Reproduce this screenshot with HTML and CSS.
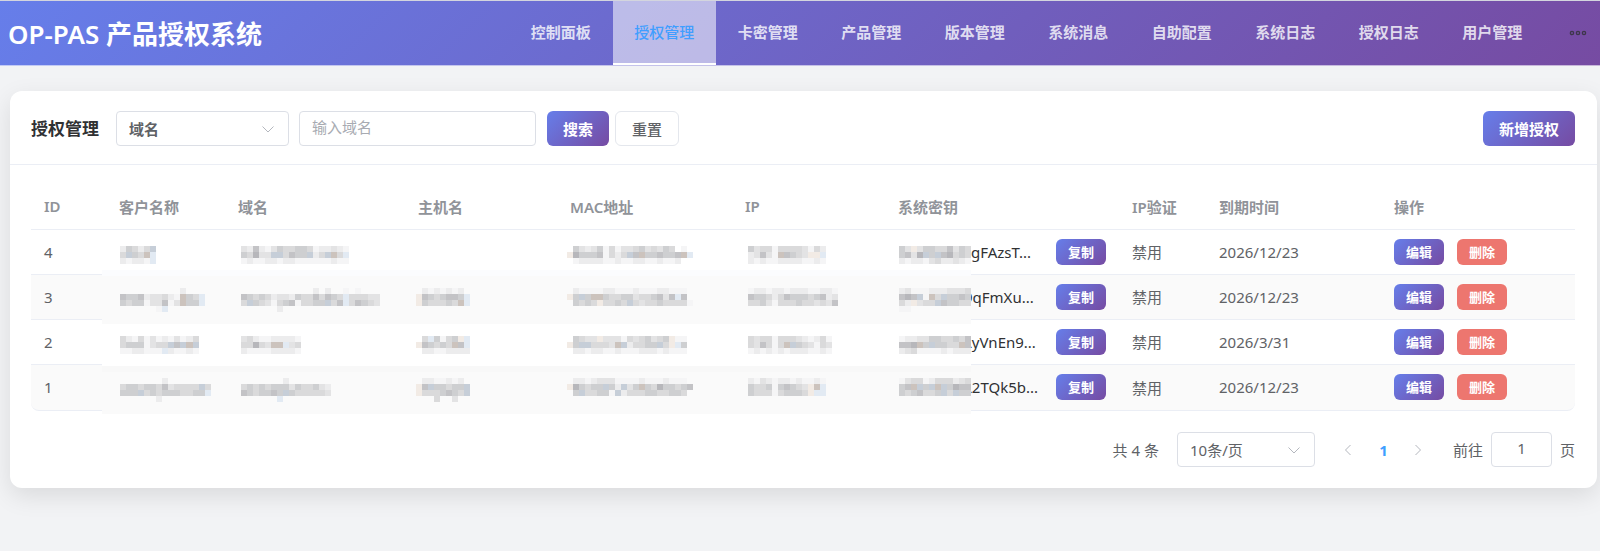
FILE: index.html
```
<!DOCTYPE html>
<html lang="zh-CN">
<head>
    <meta charset="UTF-8">
    <meta name="viewport" content="width=device-width, initial-scale=1.0">
    <title>OP-PAS 产品授权系统</title>
    <link rel="stylesheet" href="styles.css">
</head>
<body>
    <header class="header">
        <h1 class="brand">OP-PAS 产品授权系统</h1>
        <nav class="nav">
            <a href="#">控制面板</a>
            <a href="#" class="active">授权管理</a>
            <a href="#">卡密管理</a>
            <a href="#">产品管理</a>
            <a href="#">版本管理</a>
            <a href="#">系统消息</a>
            <a href="#">自助配置</a>
            <a href="#">系统日志</a>
            <a href="#">授权日志</a>
            <a href="#">用户管理</a>
            <button class="nav-more" aria-label="更多">
                <svg width="18" height="18" viewBox="0 0 18 18" fill="none" stroke="#303133" stroke-opacity="0.8" stroke-width="1.4">
                    <circle cx="3" cy="9" r="1.6"/>
                    <circle cx="9" cy="9" r="1.6"/>
                    <circle cx="15" cy="9" r="1.6"/>
                </svg>
            </button>
        </nav>
    </header>

    <main class="card">
        <div class="card-header">
            <h2>授权管理</h2>
            <div class="select select-field">
                <select aria-label="搜索字段">
                    <option>域名</option>
                </select>
                <svg width="14" height="14" viewBox="0 0 14 14"><path d="M1.5 4.5 7 10l5.5-5.5"/></svg>
            </div>
            <input class="search-input" type="text" placeholder="输入域名" aria-label="输入域名">
            <div class="search-buttons">
                <button class="btn btn-primary">搜索</button>
                <button class="btn">重置</button>
            </div>
            <button class="btn btn-primary btn-add">新增授权</button>
        </div>

        <div class="card-body">
            <div class="table-container">
                <table>
                    <thead>
                        <tr>
                            <th class="col-id">ID</th>
                            <th class="col-name">客户名称</th>
                            <th class="col-domain">域名</th>
                            <th class="col-host">主机名</th>
                            <th class="col-mac">MAC地址</th>
                            <th class="col-ip">IP</th>
                            <th class="col-key">系统密钥</th>
                            <th class="col-check">IP验证</th>
                            <th class="col-date">到期时间</th>
                            <th>操作</th>
                        </tr>
                    </thead>
                    <tbody>
                        <tr>
                            <td>4</td>
                            <td></td>
                            <td></td>
                            <td></td>
                            <td></td>
                            <td></td>
                            <td><div class="key"><span>gFAzsT...</span><button class="btn btn-primary btn-small">复制</button></div></td>
                            <td>禁用</td>
                            <td>2026/12/23</td>
                            <td><div class="actions"><button class="btn btn-primary btn-small">编辑</button><button class="btn btn-danger btn-small">删除</button></div></td>
                        </tr>
                        <tr>
                            <td>3</td>
                            <td></td>
                            <td></td>
                            <td></td>
                            <td></td>
                            <td></td>
                            <td><div class="key key-cut"><span>9qFmXu...</span><button class="btn btn-primary btn-small">复制</button></div></td>
                            <td>禁用</td>
                            <td>2026/12/23</td>
                            <td><div class="actions"><button class="btn btn-primary btn-small">编辑</button><button class="btn btn-danger btn-small">删除</button></div></td>
                        </tr>
                        <tr>
                            <td>2</td>
                            <td></td>
                            <td></td>
                            <td></td>
                            <td></td>
                            <td></td>
                            <td><div class="key key-cut"><span>LyVnEn9...</span><button class="btn btn-primary btn-small">复制</button></div></td>
                            <td>禁用</td>
                            <td>2026/3/31</td>
                            <td><div class="actions"><button class="btn btn-primary btn-small">编辑</button><button class="btn btn-danger btn-small">删除</button></div></td>
                        </tr>
                        <tr>
                            <td>1</td>
                            <td></td>
                            <td></td>
                            <td></td>
                            <td></td>
                            <td></td>
                            <td><div class="key key-cut"><span>L2TQk5b...</span><button class="btn btn-primary btn-small">复制</button></div></td>
                            <td>禁用</td>
                            <td>2026/12/23</td>
                            <td><div class="actions"><button class="btn btn-primary btn-small">编辑</button><button class="btn btn-danger btn-small">删除</button></div></td>
                        </tr>
                    </tbody>
                </table>
                <svg class="mosaic" id="mosaic" viewBox="0 0 144 30" preserveAspectRatio="none" shape-rendering="crispEdges" aria-hidden="true"></svg>
            </div>

            <div class="pagination">
                <span>共 4 条</span>
                <div class="select select-size">
                    <select aria-label="每页条数">
                        <option>10条/页</option>
                    </select>
                    <svg width="14" height="14" viewBox="0 0 14 14"><path d="M1.5 4.5 7 10l5.5-5.5"/></svg>
                </div>
                <div class="pager">
                    <button aria-label="上一页"><svg width="12" height="12" viewBox="0 0 12 12"><path d="M8.5 1 3.5 6l5 5"/></svg></button>
                    <button class="current">1</button>
                    <button aria-label="下一页"><svg width="12" height="12" viewBox="0 0 12 12"><path d="M3.5 1l5 5-5 5"/></svg></button>
                </div>
                <label class="jump">前往 <input type="text" value="1"> 页</label>
            </div>
        </div>
    </main>

    <script>
        // Colores de cada celda del mosaico
        const colors = {
            1: '#f5f5f6', 2: '#ececed', 3: '#e3e3e4', 4: '#dadadb',
            5: '#cecfd1', 6: '#c3c3c6', 7: '#b7b7bb',
            b: '#e2eaf3', B: '#c6ced8', w: '#f2ebe5', W: '#ccc3bd'
        };

        // [columna, fila, líneas]
        const blocks = [
            // ID 4
            [3, 2, ['25424B', '4B54Wb', '21221b']],
            [23, 2, ['326213544554122321', '54733BB4655B24BW4b', '121122122111111211']],
            [77, 2, ['.53235141334534354.1', 'w755561424B6W556556Wb', '.122221121122112112']],
            [107, 2, ['5344144443142', '23631W6543wwb', '2121122221121']],
            [132, 2, ['53w355446354', '5637B5B67454', '212213422321']],
            // ID 3
            [3, 9, ['..........2', '6556233421W54b', '5455133613W55b', '......1b']],
            [23, 9, ['............2.2..1.1', '65454233254464654b44433', '4B543145614455B46b46543', '......2']],
            [52, 9, ['.2121212', 'w6545665b', 'w544454Wb']],
            [77, 9, ['.2111122111211122111', 'w5B5WW544553445636b6', '.5454w4454B4344544441']],
            [107, 9, ['122122122211221', '655424655545623', '445314445443436']],
            [132, 9, ['231112223334', '676B1W4B5565', '42w344B65544', '11']],
            // ID 2
            [3, 17, ['4214131213124', '45551344B6BWB', '1122111b21121']],
            [23, 17, ['3421122221', '44743WWb34', '2111122221']],
            [52, 17, ['.4b5145wb', 'w65454W6b', '.22112222']],
            [77, 17, ['.5433w33314345345w11', 'w5BB4443WB24455B4wb5', '.2212211211122212111']],
            [107, 17, ['43441444321241', '436414WB543143', '12121212221121']],
            [132, 17, ['122335544546', '667W5B5544W67', '234111121222']],
            // ID 1
            [3, 24, ['.......2', '4554554634444B4', '555B4545554455b', '......2']],
            [23, 24, ['.......2', '454545553544532', '6545565B5444443', '......b']],
            [52, 24, ['.2211212', 'w6B55455B', 'w4445654B', '...4..3']],
            [77, 24, ['.2212333111121112111', 'w75455B52B35W54755456', '.5B44551B24445544554']],
            [107, 24, ['2132122121121', '5445156543wWb', '5444145554wbb']],
            [132, 24, ['134412444234', '56WB5BWB5766', '5456445B4B55']]
        ];

        function rect(x, y, width, height, fill) {
            return `<rect x="${x}" y="${y}" width="${width}" height="${height}" fill="${fill}"/>`;
        }

        let shapes = rect(0, 0, 144, 6, '#ffffff')
            + rect(0, 6, 144, 1, '#fbfcfe')
            + rect(0, 7, 144, 8, '#fafafa')
            + rect(0, 15, 144, 7, '#ffffff')
            + rect(0, 22, 144, 1, '#f8f8f8')
            + rect(0, 23, 144, 7, '#fafafa');

        blocks.forEach(([col, row, lines]) => {
            lines.forEach((line, y) => {
                [...line].forEach((cell, x) => {
                    if (colors[cell] && col + x < 144) {
                        shapes += rect(col + x, row + y, 1, 1, colors[cell]);
                    }
                });
            });
        });

        document.getElementById('mosaic').innerHTML = shapes;
    </script>
</body>
</html>
```
FILE: styles.css
```
* {
    box-sizing: border-box;
}
body {
    margin: 0;
    min-height: 100vh;
    font-family: "Noto Sans", "Noto Sans CJK SC", sans-serif;
    font-size: 15px;
    color: #606266;
    background-color: #f2f3f5;
}
button, input, select {
    font-family: inherit;
    font-size: 15px;
    color: #606266;
}
button {
    cursor: pointer;
}

/* Header */
.header {
    display: flex;
    height: 66px;
    border-top: 1px solid #d3d5de;
    border-bottom: 1px solid rgba(255, 255, 255, 0.6);
    background: linear-gradient(135deg, #667eea 0%, #764ba2 100%) border-box;
}
.brand {
    flex: 1;
    margin: 0;
    padding-left: 8px;
    font-size: 26px;
    font-weight: 600;
    line-height: 66px;
    color: #fff;
    white-space: nowrap;
}
.nav {
    display: flex;
    flex: 0 1 1091px;
}
.nav a {
    flex: 1;
    line-height: 62px;
    text-align: center;
    font-weight: 600;
    color: rgba(255, 255, 255, 0.8);
    text-decoration: none;
    white-space: nowrap;
}
.nav a.active {
    font-weight: 500;
    color: #409eff;
    background-color: rgba(255, 255, 255, 0.55);
    border-bottom: 2px solid #fff;
}
.nav-more {
    width: 56px;
    padding: 0 0 0 12px;
    border: none;
    background: none;
    line-height: 0;
}

/* Card */
.card {
    margin: 25px 3px 0 10px;
    border-radius: 12px;
    background-color: #fff;
    box-shadow: 0 8px 24px rgba(0, 0, 0, 0.1);
}
.card-header {
    display: flex;
    align-items: center;
    padding: 20px 22px 18px 21px;
    border-bottom: 1px solid #ebeef5;
}
.card-header h2 {
    margin: 0 17px 0 0;
    font-size: 17px;
    font-weight: 700;
    line-height: 24px;
    color: #303133;
}
.card-body {
    padding: 20px 22px 21px 21px;
}
.select {
    position: relative;
}
.select select {
    width: 100%;
    height: 35px;
    padding: 0 12px;
    border: 1px solid #dcdfe6;
    border-radius: 4px;
    background-color: #fff;
    appearance: none;
}
.select svg {
    position: absolute;
    top: 11px;
    right: 14px;
    pointer-events: none;
}
.select path, .pager path {
    fill: none;
    stroke: #b4b7be;
}
.select-field {
    width: 173px;
    margin-right: 10px;
}
.select-field select {
    font-weight: 600;
}
.search-input {
    width: 237px;
    height: 35px;
    margin-right: 11px;
    padding: 0 12px 3px;
    border: 1px solid #dcdfe6;
    border-radius: 4px;
}
.search-input::placeholder {
    color: #a8abb2;
}
.search-buttons {
    display: flex;
    gap: 6px;
}
.btn {
    height: 35px;
    padding: 0 16px 1px;
    border: 1px solid #e4e7ed;
    border-radius: 6px;
    background-color: #fff;
    font-weight: 500;
    white-space: nowrap;
}
.btn-primary {
    border: none;
    color: #fff;
    font-weight: 600;
    background: linear-gradient(135deg, #667eea 0%, #764ba2 100%);
}
.btn-danger {
    border: none;
    color: #fff;
    font-weight: 600;
    background-color: #ed766f;
}
.btn-small {
    height: 26px;
    padding: 0 12px 1px;
    font-size: 13px;
}
.btn-add {
    margin-left: auto;
}

/* Table */
.table-container {
    position: relative;
}
table {
    width: 100%;
    table-layout: fixed;
    border-collapse: separate;
    border-spacing: 0;
}
th, td {
    padding: 0 13px;
    border-bottom: 1px solid #ebeef5;
    text-align: left;
    white-space: nowrap;
}
th {
    height: 45px;
    padding-bottom: 2px;
    font-weight: 600;
    color: #909399;
}
td {
    height: 45px;
    padding-bottom: 1px;
}
tbody tr:nth-child(even) td {
    background-color: #fafafa;
}
tbody tr:last-child td {
    height: 46px;
}
tbody tr:last-child td:first-child {
    border-bottom-left-radius: 8px;
}
tbody tr:last-child td:last-child {
    border-bottom-right-radius: 8px;
}
.col-id { width: 75px; }
.col-name { width: 119px; }
.col-domain { width: 180px; }
.col-host { width: 152px; }
.col-mac { width: 175px; }
.col-ip { width: 153px; }
.col-key { width: 234px; }
.col-check { width: 87px; }
.col-date { width: 175px; }
.key {
    display: flex;
    align-items: center;
    justify-content: space-between;
    padding-left: 73px;
    color: #303133;
}
.key-cut {
    padding-left: 66px;
}
.actions {
    display: flex;
    gap: 13px;
}
.mosaic {
    position: absolute;
    top: 49px;
    left: 71px;
    width: 869px;
    height: 180px;
}

/* Pagination */
.pagination {
    display: flex;
    align-items: center;
    justify-content: flex-end;
    padding-top: 21px;
}
.select-size {
    width: 138px;
    margin: 0 16px 0 18px;
}
.pager {
    display: flex;
}
.pager button {
    width: 35px;
    height: 35px;
    padding: 0;
    border: none;
    background: none;
}
.pager .current {
    font-weight: 700;
    color: #409eff;
}
.jump {
    display: flex;
    align-items: center;
    gap: 8px;
    margin-left: 17px;
}
.jump input {
    width: 61px;
    height: 35px;
    padding: 0 0 3px;
    border: 1px solid #dcdfe6;
    border-radius: 4px;
    text-align: center;
}
```
